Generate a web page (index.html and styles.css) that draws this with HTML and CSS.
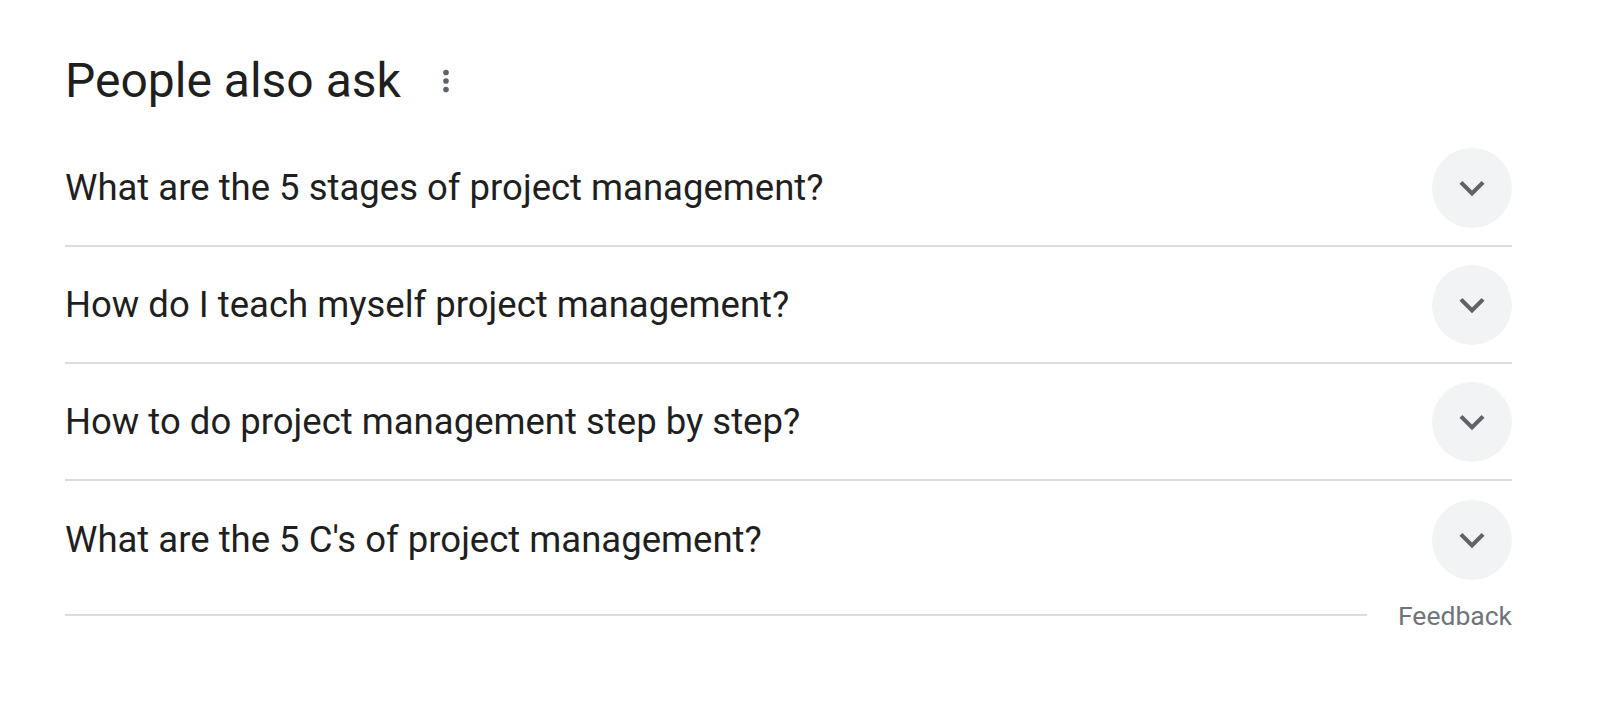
FILE: index.html
```html
<!DOCTYPE html>
<html lang="en">
<head>
<meta charset="utf-8">
<title>People also ask</title>
<link rel="stylesheet" href="styles.css">
</head>
<body>
<div class="paa">
  <div class="paa-header">
    <h2 class="paa-title">People also ask</h2>
    <svg class="paa-more" viewBox="0 0 24 24" aria-hidden="true"><circle cx="12" cy="6" r="2"/><circle cx="12" cy="12" r="2"/><circle cx="12" cy="18" r="2"/></svg>
  </div>
  <div class="paa-list">
    <div class="paa-row">
      <span class="paa-q">What are the 5 stages of project management?</span>
      <span class="paa-btn"><svg viewBox="0 0 24 24" aria-hidden="true"><path d="M16.59 8.59L12 13.17 7.41 8.59 6 10l6 6 6-6z"/></svg></span>
    </div>
    <div class="paa-row">
      <span class="paa-q">How do I teach myself project management?</span>
      <span class="paa-btn"><svg viewBox="0 0 24 24" aria-hidden="true"><path d="M16.59 8.59L12 13.17 7.41 8.59 6 10l6 6 6-6z"/></svg></span>
    </div>
    <div class="paa-row">
      <span class="paa-q">How to do project management step by step?</span>
      <span class="paa-btn"><svg viewBox="0 0 24 24" aria-hidden="true"><path d="M16.59 8.59L12 13.17 7.41 8.59 6 10l6 6 6-6z"/></svg></span>
    </div>
    <div class="paa-row paa-row-last">
      <span class="paa-q">What are the 5 C's of project management?</span>
      <span class="paa-btn"><svg viewBox="0 0 24 24" aria-hidden="true"><path d="M16.59 8.59L12 13.17 7.41 8.59 6 10l6 6 6-6z"/></svg></span>
    </div>
  </div>
  <div class="paa-feedback">
    <div class="paa-line"></div>
    <span class="paa-fb">Feedback</span>
  </div>
</div>
</body>
</html>
```

FILE: styles.css
```css
html, body {
  margin: 0;
  padding: 0;
  background: #fff;
}
body {
  font-family: Roboto, "Liberation Sans", Arial, sans-serif;
  color: #1f1f1f;
}
.paa {
  margin-left: 65px;
  width: 1447px;
}
.paa-header {
  display: flex;
  align-items: center;
  padding-top: 53px;
  padding-bottom: 21px;
}
.paa-title {
  margin: 0;
  font-size: 48px;
  font-weight: 400;
  line-height: 56px;
}
.paa-more {
  width: 34px;
  height: 34px;
  margin-left: 28px;
  fill: #5f6368;
}
.paa-row {
  display: flex;
  align-items: center;
  justify-content: space-between;
  height: 115px;
  border-bottom: 2px solid #dadce0;
}
.paa-row-last {
  height: 117px;
  border-bottom: none;
}
.paa-q {
  font-size: 36.5px;
  line-height: 42px;
}
.paa-btn {
  width: 80px;
  height: 80px;
  border-radius: 50%;
  background: #f1f3f4;
  display: flex;
  align-items: center;
  justify-content: center;
}
.paa-btn svg {
  width: 50px;
  height: 50px;
  fill: #5f6368;
}
.paa-feedback {
  display: flex;
  align-items: center;
  height: 34px;
}
.paa-line {
  flex: 1;
  height: 2px;
  background: #dadce0;
  margin-right: 31px;
}
.paa-fb {
  font-size: 26.5px;
  color: #70757a;
}
```
